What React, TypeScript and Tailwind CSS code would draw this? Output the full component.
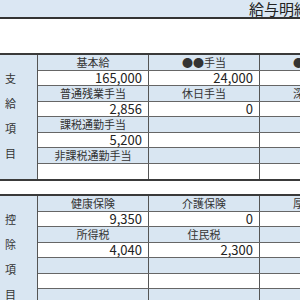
const font = { fontFamily: '"Noto Sans CJK JP", "Noto Sans", sans-serif' };

type Row = { kind: 'label' | 'value'; cells: string[] };

const payRows: Row[] = [
  { kind: 'label', cells: ['基本給', '●●手当', '●●手当'] },
  { kind: 'value', cells: ['165,000', '24,000', ''] },
  { kind: 'label', cells: ['普通残業手当', '休日手当', '深夜手当'] },
  { kind: 'value', cells: ['2,856', '0', ''] },
  { kind: 'label', cells: ['課税通勤手当', '', ''] },
  { kind: 'value', cells: ['5,200', '', ''] },
  { kind: 'label', cells: ['非課税通勤手当', '', ''] },
  { kind: 'value', cells: ['', '', ''] },
];

const deductRows: Row[] = [
  { kind: 'label', cells: ['健康保険', '介護保険', '厚生年金'] },
  { kind: 'value', cells: ['9,350', '0', ''] },
  { kind: 'label', cells: ['所得税', '住民税', ''] },
  { kind: 'value', cells: ['4,040', '2,300', ''] },
  { kind: 'label', cells: ['', '', ''] },
  { kind: 'value', cells: ['', '', ''] },
  { kind: 'label', cells: ['', '', ''] },
  { kind: 'value', cells: ['', '', ''] },
];

function Section({ side, rows }: { side: string[]; rows: Row[] }) {
  return (
    <div className="flex border-t-2 border-b-2 border-[#3a3a3a]">
      <div className="w-[38px] shrink-0 bg-[#d9e6f2] border-r border-[#555] flex flex-col gap-[14px] pt-[18px] pl-[5px] text-[11px] leading-[11px] text-[#333]">
        {side.map((c, i) => (
          <span key={i}>{c}</span>
        ))}
      </div>
      <div className="flex flex-col">
        {rows.map((row, i) => (
          <div
            key={i}
            className={`grid grid-cols-[111px_111px_111px] h-[15.5px] ${
              i < rows.length - 1 ? 'border-b border-[#666]' : ''
            } ${row.kind === 'label' ? 'bg-[#d9e6f2]' : 'bg-white'}`}
          >
            {row.cells.map((c, j) => (
              <div
                key={j}
                className={`border-r border-[#555] flex items-center ${
                  row.kind === 'label'
                    ? 'justify-center text-[11px] text-[#333]'
                    : 'justify-end pr-[6px] text-[13px] text-[#222]'
                } leading-none`}
              >
                {c}
              </div>
            ))}
          </div>
        ))}
      </div>
    </div>
  );
}

export default function App() {
  return (
    <div className="w-[300px] h-[300px] overflow-hidden bg-white" style={font}>
      <div className="w-[380px]">
        <div className="h-[19px] bg-[#dbe7f3] border-b-2 border-[#333] pl-[249px] text-[15px] leading-[17px] text-[#222] whitespace-nowrap">
          給与明細書
        </div>
        <div className="h-[34px]" />
        <Section side={['支', '給', '項', '目']} rows={payRows} />
        <div className="h-[13px]" />
        <Section side={['控', '除', '項', '目']} rows={deductRows} />
      </div>
    </div>
  );
}
